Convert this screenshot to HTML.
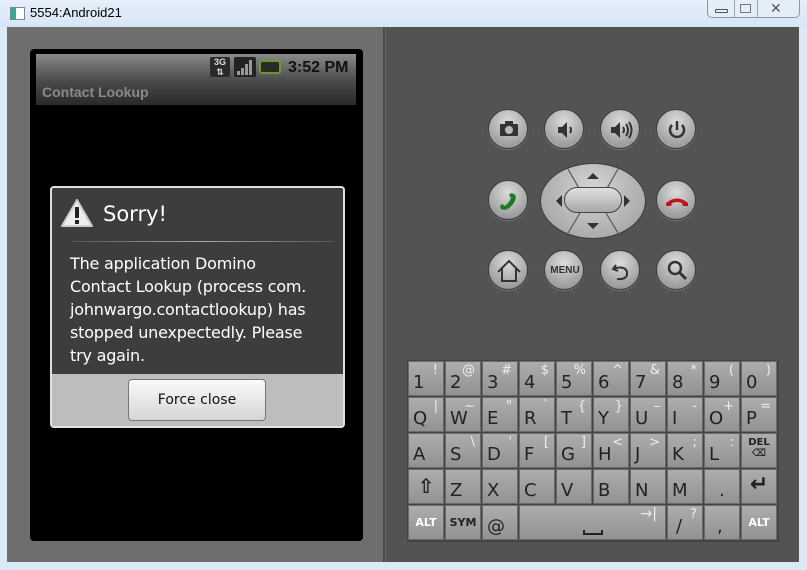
<!DOCTYPE html>
<html><head><style>
*{margin:0;padding:0;box-sizing:border-box}
body{width:807px;height:570px;overflow:hidden;background:#dce9f7;font-family:"Liberation Sans","DejaVu Sans",sans-serif;position:relative}
.abs{position:absolute}
.k{position:absolute;width:36px;height:35px;background:linear-gradient(#adadad,#929292);border:1px solid #6a6a6a;color:#222;font-family:"DejaVu Sans",sans-serif}
.k .m{position:absolute;left:4px;bottom:2px;font-size:18px}
.k .s{position:absolute;right:5px;top:1px;font-size:13px;color:#eee}
.k .b{position:absolute;left:0;right:0;top:10px;text-align:center;font-size:11px;font-weight:bold;color:#fff}
.rb{position:absolute;width:40px;height:40px;border-radius:50%;background:radial-gradient(circle at 50% 30%,#dcdcdc,#a0a0a0 70%,#8a8a8a);border:1px solid #3c3c3c;box-shadow:0 1px 1px #777}
.rb svg{position:absolute;left:0;top:0}
</style></head><body>
<div class="abs" style="left:0;top:0;width:807px;height:27px;background:linear-gradient(#e6effa,#d6e5f6)"></div>
<div class="abs" style="left:10px;top:7px;width:15px;height:13px;border:1px solid #789;background:linear-gradient(90deg,#3a8 0 40%,#fff 40%)"></div>
<div class="abs" style="left:30px;top:5px;font-size:13px;color:#000">5554:Android21</div>
<div class="abs" style="left:707px;top:0;width:93px;height:18px;border:1px solid #8a97a8;border-top:none;border-radius:0 0 5px 5px;background:#e4eef9"></div>
<div class="abs" style="left:734px;top:0;width:1px;height:18px;background:#9aa"></div>
<div class="abs" style="left:757px;top:0;width:1px;height:18px;background:#9aa"></div>
<div class="abs" style="left:715px;top:9px;width:13px;height:4px;border:1px solid #555;border-radius:1px"></div>
<div class="abs" style="left:740px;top:4px;width:11px;height:9px;border:1px solid #777"></div>
<div class="abs" style="left:770px;top:0px;font-size:14px;color:#555">✕</div>
<div class="abs" style="left:7px;top:27px;width:376px;height:535px;background:#6e6e6e"></div>
<div class="abs" style="left:383px;top:27px;width:3px;height:535px;background:#4a4a4a;border-right:1px solid #666"></div>
<div class="abs" style="left:386px;top:27px;width:413px;height:535px;background:#535353"></div>
<!-- phone -->
<div class="abs" style="left:30px;top:49px;width:333px;height:492px;background:#000;border-radius:4px"></div>
<div class="abs" style="left:36px;top:54px;width:320px;height:27px;background:linear-gradient(#8a8a8a,#4a4a4a)"></div>
<div class="abs" style="left:210px;top:57px;width:20px;height:20px;background:#2a2a2a;color:#ddd;font-size:9px;font-weight:bold;text-align:center;border-radius:2px;line-height:10px">3G<br>⇅</div>
<svg class="abs" style="left:234px;top:57px" width="22" height="20"><rect width="22" height="20" rx="2" fill="#222"/><rect x="3" y="14" width="3" height="4" fill="#999"/><rect x="7" y="11" width="3" height="7" fill="#999"/><rect x="11" y="7" width="3" height="11" fill="#999"/><rect x="15" y="3" width="3" height="15" fill="#999"/></svg>
<div class="abs" style="left:259px;top:60px;width:22px;height:14px;background:#2a2a2a;border:2px solid #6a9a2a;border-radius:3px"></div>
<div class="abs" style="left:288px;top:59px;font-size:16px;font-weight:bold;color:#111">3:52 PM</div>
<div class="abs" style="left:36px;top:81px;width:320px;height:24px;background:linear-gradient(#4a4a4a,#2a2a2a)"></div>
<div class="abs" style="left:42px;top:84px;font-size:14px;font-weight:bold;color:#8a8a8a">Contact Lookup</div>
<!-- dialog -->
<div class="abs" style="left:50px;top:186px;width:295px;height:242px;background:#3d3d3d;border:2px solid #e0e0e0;border-radius:4px;overflow:hidden">
 <svg class="abs" style="left:8px;top:10px" width="34" height="30"><path d="M17 2 L32 28 L2 28 Z" fill="#eee" stroke="#ccc" stroke-linejoin="round" stroke-width="2"/><rect x="15" y="9" width="4" height="11" fill="#222"/><rect x="15" y="22" width="4" height="4" fill="#222"/></svg>
 <div class="abs" style="left:51px;top:14px;font-size:21px;color:#fff;font-family:'DejaVu Sans',sans-serif">Sorry!</div>
 <div class="abs" style="left:20px;top:53px;width:262px;height:1px;background:linear-gradient(90deg,#555,#aaa,#555)"></div>
 <div class="abs" style="left:18px;top:64px;width:290px;white-space:nowrap;font-size:16px;line-height:23px;color:#fff;font-family:'DejaVu Sans',sans-serif;letter-spacing:-0.2px">The application Domino<br>Contact Lookup (process com.<br>johnwargo.contactlookup) has<br>stopped unexpectedly. Please<br>try again.</div>
 <div class="abs" style="left:0;top:186px;width:295px;height:56px;background:#bdbdbd"></div>
 <div class="abs" style="left:76px;top:191px;width:138px;height:42px;background:linear-gradient(#fafafa,#d6d6d6);border:1px solid #777;border-radius:4px;text-align:center;line-height:40px;font-size:14px;color:#111;font-family:'DejaVu Sans',sans-serif">Force close</div>
</div>
<!-- buttons -->
<div class="rb" style="left:488px;top:109px"><svg width="40" height="40"><rect x="11" y="14" width="18" height="12" rx="1" fill="#333"/><rect x="16" y="11" width="8" height="4" fill="#333"/><circle cx="20" cy="20" r="4" fill="#bbb"/></svg></div>
<div class="rb" style="left:544px;top:109px"><svg width="40" height="40"><path d="M13 17h4l5-5v16l-5-5h-4z" fill="#333"/><path d="M25 17q2 3 0 6" stroke="#333" stroke-width="2" fill="none"/></svg></div>
<div class="rb" style="left:600px;top:109px"><svg width="40" height="40"><path d="M10 17h4l5-5v16l-5-5h-4z" fill="#333"/><path d="M22 17q2 3 0 6M25 14q4 6 0 12M28 12q5 8 0 16" stroke="#333" stroke-width="2" fill="none"/></svg></div>
<div class="rb" style="left:656px;top:109px"><svg width="40" height="40"><path d="M15 15a7 7 0 1 0 10 0" stroke="#333" stroke-width="2.5" fill="none"/><path d="M20 11v9" stroke="#333" stroke-width="2.5"/></svg></div>
<div class="rb" style="left:488px;top:180px"><svg width="40" height="40"><path d="M12 28q-2-3 1-5l3 2q4-3 6-8l-2-3q2-3 5-1q4 3-1 10q-6 8-12 5z" fill="#1a7a2a"/></svg></div>
<div class="rb" style="left:656px;top:180px"><svg width="40" height="40"><path d="M9 22q11-9 22 0v3h-5l-1-3q-5-2-10 0l-1 3h-5z" fill="#c0141a"/></svg></div>
<div class="abs" style="left:540px;top:163px;width:106px;height:76px;border-radius:50%;background:radial-gradient(ellipse at 50% 35%,#d6d6d6,#9a9a9a);border:1px solid #3c3c3c"></div>
<svg class="abs" style="left:540px;top:163px" width="106" height="76"><path d="M28 6 L40 27 M78 6 L66 27 M28 70 L40 50 M78 70 L66 50" stroke="#555" stroke-width="1.2"/><path d="M47 16h12l-6-6z M47 60h12l-6 6z M16 38l6-6v12z M90 38l-6-6v12z" fill="#333"/></svg>
<div class="abs" style="left:564px;top:187px;width:58px;height:26px;border-radius:13px;background:linear-gradient(#e0e0e0,#a8a8a8);border:1px solid #444"></div>
<div class="rb" style="left:488px;top:250px"><svg width="40" height="40"><path d="M9 21 L20 10 L31 21 M13 18v12h14v-12" stroke="#333" stroke-width="2" fill="none"/></svg></div>
<div class="rb" style="left:544px;top:250px"><div class="abs" style="left:0;width:40px;top:14px;text-align:center;font-size:10px;font-weight:bold;color:#333">MENU</div></div>
<div class="rb" style="left:600px;top:250px"><svg width="40" height="40"><path d="M15 14 L12 18 L17 20 M12 18 Q24 14 26 21 Q27 29 16 28" stroke="#333" stroke-width="2" fill="none"/></svg></div>
<div class="rb" style="left:656px;top:250px"><svg width="40" height="40"><circle cx="18" cy="17" r="6" stroke="#333" stroke-width="2.5" fill="none"/><path d="M22 21l7 7" stroke="#333" stroke-width="3"/></svg></div>
<!-- keyboard -->
<div class="abs" style="left:407px;top:360px;width:372px;height:182px;background:#444"></div>
<div class="k" style="left:408px;top:361px"><span class="m">1</span><span class="s">!</span></div>
<div class="k" style="left:445px;top:361px"><span class="m">2</span><span class="s">@</span></div>
<div class="k" style="left:482px;top:361px"><span class="m">3</span><span class="s">#</span></div>
<div class="k" style="left:519px;top:361px"><span class="m">4</span><span class="s">$</span></div>
<div class="k" style="left:556px;top:361px"><span class="m">5</span><span class="s">%</span></div>
<div class="k" style="left:593px;top:361px"><span class="m">6</span><span class="s">^</span></div>
<div class="k" style="left:630px;top:361px"><span class="m">7</span><span class="s">&amp;</span></div>
<div class="k" style="left:667px;top:361px"><span class="m">8</span><span class="s">*</span></div>
<div class="k" style="left:704px;top:361px"><span class="m">9</span><span class="s">(</span></div>
<div class="k" style="left:741px;top:361px"><span class="m">0</span><span class="s">)</span></div>
<div class="k" style="left:408px;top:397px"><span class="m">Q</span><span class="s">|</span></div>
<div class="k" style="left:445px;top:397px"><span class="m">W</span><span class="s">~</span></div>
<div class="k" style="left:482px;top:397px"><span class="m">E</span><span class="s">"</span></div>
<div class="k" style="left:519px;top:397px"><span class="m">R</span><span class="s">`</span></div>
<div class="k" style="left:556px;top:397px"><span class="m">T</span><span class="s">{</span></div>
<div class="k" style="left:593px;top:397px"><span class="m">Y</span><span class="s">}</span></div>
<div class="k" style="left:630px;top:397px"><span class="m">U</span><span class="s">–</span></div>
<div class="k" style="left:667px;top:397px"><span class="m">I</span><span class="s">-</span></div>
<div class="k" style="left:704px;top:397px"><span class="m">O</span><span class="s">+</span></div>
<div class="k" style="left:741px;top:397px"><span class="m">P</span><span class="s">=</span></div>
<div class="k" style="left:408px;top:433px"><span class="m">A</span></div>
<div class="k" style="left:445px;top:433px"><span class="m">S</span><span class="s">\</span></div>
<div class="k" style="left:482px;top:433px"><span class="m">D</span><span class="s">'</span></div>
<div class="k" style="left:519px;top:433px"><span class="m">F</span><span class="s">[</span></div>
<div class="k" style="left:556px;top:433px"><span class="m">G</span><span class="s">]</span></div>
<div class="k" style="left:593px;top:433px"><span class="m">H</span><span class="s">&lt;</span></div>
<div class="k" style="left:630px;top:433px"><span class="m">J</span><span class="s">&gt;</span></div>
<div class="k" style="left:667px;top:433px"><span class="m">K</span><span class="s">;</span></div>
<div class="k" style="left:704px;top:433px"><span class="m">L</span><span class="s">:</span></div>
<div class="k" style="left:741px;top:433px"><span class="b" style="top:3px;color:#222;font-size:10px">DEL<br>⌫</span></div>
<div class="k" style="left:408px;top:469px"><span class="b" style="top:4px;color:#222;font-size:20px">⇧</span></div>
<div class="k" style="left:445px;top:469px"><span class="m">Z</span></div>
<div class="k" style="left:482px;top:469px"><span class="m">X</span></div>
<div class="k" style="left:519px;top:469px"><span class="m">C</span></div>
<div class="k" style="left:556px;top:469px"><span class="m">V</span></div>
<div class="k" style="left:593px;top:469px"><span class="m">B</span></div>
<div class="k" style="left:630px;top:469px"><span class="m">N</span></div>
<div class="k" style="left:667px;top:469px"><span class="m">M</span></div>
<div class="k" style="left:704px;top:469px"><span class="m" style="left:14px">.</span></div>
<div class="k" style="left:741px;top:469px"><span class="b" style="top:2px;color:#222;font-size:22px">↵</span></div>
<div class="k" style="left:408px;top:505px"><span class="b">ALT</span></div>
<div class="k" style="left:445px;top:505px"><span class="b" style="color:#222">SYM</span></div>
<div class="k" style="left:482px;top:505px"><span class="m">@</span></div>
<div class="k" style="left:519px;top:505px;width:147px"><span class="s" style="right:8px;top:0;font-size:14px">→|</span><span class="abs" style="left:63px;top:24px;width:20px;height:5px;border:2px solid #222;border-top:none"></span></div>
<div class="k" style="left:667px;top:505px"><span class="m" style="left:8px">/</span><span class="s">?</span></div>
<div class="k" style="left:704px;top:505px"><span class="m" style="left:12px">,</span></div>
<div class="k" style="left:741px;top:505px"><span class="b">ALT</span></div>
</body></html>
